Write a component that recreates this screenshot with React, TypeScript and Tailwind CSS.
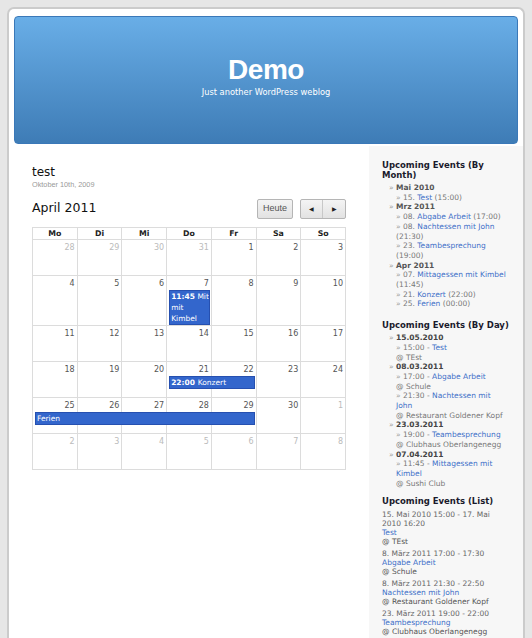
import type { ReactNode } from 'react';

const sans = "font-['DejaVu_Sans',Verdana,sans-serif]";

type Day = { n: number; other?: boolean };
type Ev = { col: string; time?: string; title: string; wrap?: boolean };

const colStart = [
  'col-start-1',
  'col-start-2',
  'col-start-3',
  'col-start-4',
  'col-start-5',
  'col-start-6',
  'col-start-7',
];

const weeks: { days: Day[]; events: Ev[] }[] = [
  {
    days: [{ n: 28, other: true }, { n: 29, other: true }, { n: 30, other: true }, { n: 31, other: true }, { n: 1 }, { n: 2 }, { n: 3 }],
    events: [],
  },
  {
    days: [4, 5, 6, 7, 8, 9, 10].map((n) => ({ n })),
    events: [{ col: 'col-[4/5]', time: '11:45', title: 'Mittagessen mit Kimbel', wrap: true }],
  },
  { days: [11, 12, 13, 14, 15, 16, 17].map((n) => ({ n })), events: [] },
  {
    days: [18, 19, 20, 21, 22, 23, 24].map((n) => ({ n })),
    events: [{ col: 'col-[4/6]', time: '22:00', title: 'Konzert' }],
  },
  {
    days: [{ n: 25 }, { n: 26 }, { n: 27 }, { n: 28 }, { n: 29 }, { n: 30 }, { n: 1, other: true }],
    events: [{ col: 'col-[1/6]', title: 'Ferien' }],
  },
  { days: [2, 3, 4, 5, 6, 7, 8].map((n) => ({ n, other: true })), events: [] },
];

function EventBar({ ev }: { ev: Ev }) {
  return (
    <div
      className={`${ev.col} row-start-2 mx-[2px] mb-[1px] bg-[#3366cc] border border-[#2650b0] text-white text-[7.5px] leading-[11px] px-[1px] overflow-hidden`}
    >
      {ev.wrap ? (
        <>
          <span className="whitespace-nowrap">
            <b>{ev.time}</b> Mittagessen
          </span>{' '}
          mit Kimbel
        </>
      ) : (
        <>
          {ev.time && <b>{ev.time} </b>}
          {ev.title}
        </>
      )}
    </div>
  );
}

function Calendar() {
  return (
    <div className="border-l border-t border-[#dcdcdc]">
      <div className="grid grid-cols-7">
        {['Mo', 'Di', 'Mi', 'Do', 'Fr', 'Sa', 'So'].map((d) => (
          <div
            key={d}
            className="border-r border-b border-[#dcdcdc] h-[12px] text-center text-[7.8px] leading-[11px] font-bold text-[#222]"
          >
            {d}
          </div>
        ))}
      </div>
      {weeks.map((w, wi) => (
        <div key={wi} className="grid grid-cols-7 grid-rows-[auto_auto_1fr] min-h-[36px]">
          {w.days.map((d, i) => (
            <div key={'c' + i} className={`${colStart[i]} row-[1/4] border-r border-b border-[#dcdcdc]`} />
          ))}
          {w.days.map((d, i) => (
            <div
              key={'n' + i}
              className={`${colStart[i]} row-start-1 text-right pr-[3px] pt-[2px] text-[8px] leading-[12px] ${
                d.other ? 'text-[#bbb]' : 'text-[#555]'
              }`}
            >
              {d.n}
            </div>
          ))}
          {w.events.map((ev, i) => (
            <EventBar key={'e' + i} ev={ev} />
          ))}
        </div>
      ))}
    </div>
  );
}

function Widget({ title, children, gap = 'mb-[11px]' }: { title: string; children: ReactNode; gap?: string }) {
  return (
    <div className={gap}>
      <h3 className="text-[8.5px] leading-[10px] font-bold text-[#1a1a2c] mb-[3px]">{title}</h3>
      {children}
    </div>
  );
}

const Raquo = () => <span className="text-[#999]">» </span>;
const L = ({ children }: { children: ReactNode }) => <span className="text-[#3d6fc8]">{children}</span>;

const byMonth: { month: string; items: [string, string, string][] }[] = [
  { month: 'Mai 2010', items: [['15.', 'Test', '(15:00)']] },
  {
    month: 'Mrz 2011',
    items: [
      ['08.', 'Abgabe Arbeit', '(17:00)'],
      ['08.', 'Nachtessen mit John', '(21:30)'],
      ['23.', 'Teambesprechung', '(19:00)'],
    ],
  },
  {
    month: 'Apr 2011',
    items: [
      ['07.', 'Mittagessen mit Kimbel', '(11:45)'],
      ['21.', 'Konzert', '(22:00)'],
      ['25.', 'Ferien', '(00:00)'],
    ],
  },
];

const byDay: { date: string; items: [string, string, string][] }[] = [
  { date: '15.05.2010', items: [['15:00', 'Test', 'TEst']] },
  {
    date: '08.03.2011',
    items: [
      ['17:00', 'Abgabe Arbeit', 'Schule'],
      ['21:30', 'Nachtessen mit John', 'Restaurant Goldener Kopf'],
    ],
  },
  { date: '23.03.2011', items: [['19:00', 'Teambesprechung', 'Clubhaus Oberlangenegg']] },
  { date: '07.04.2011', items: [['11:45', 'Mittagessen mit Kimbel', 'Sushi Club']] },
];

const list: [string, string, string][] = [
  ['15. Mai 2010 15:00 - 17. Mai 2010 16:20', 'Test', 'TEst'],
  ['8. März 2011 17:00 - 17:30', 'Abgabe Arbeit', 'Schule'],
  ['8. März 2011 21:30 - 22:50', 'Nachtessen mit John', 'Restaurant Goldener Kopf'],
  ['23. März 2011 19:00 - 22:00', 'Teambesprechung', 'Clubhaus Oberlangenegg'],
];

function Sidebar() {
  return (
    <aside className="w-[154px] shrink-0 bg-[#f7f7f7] pl-[13px] pr-[14px] pt-[14px] text-[7.5px] leading-[9.7px] text-[#777]">
      <Widget title="Upcoming Events (By Month)">
        <ul className="pl-[7px]">
          {byMonth.map((m) => (
            <li key={m.month}>
              <Raquo />
              <b className="text-[#555]">{m.month}</b>
              <ul className="pl-[7px]">
                {m.items.map(([d, t, h]) => (
                  <li key={t}>
                    <Raquo />
                    {d} <L>{t}</L> {h}
                  </li>
                ))}
              </ul>
            </li>
          ))}
        </ul>
      </Widget>
      <Widget title="Upcoming Events (By Day)" gap="mb-[8px]">
        <ul className="pl-[7px]">
          {byDay.map((d) => (
            <li key={d.date}>
              <Raquo />
              <b className="text-[#444]">{d.date}</b>
              <ul className="pl-[7px]">
                {d.items.map(([time, t, loc]) => (
                  <li key={t}>
                    <Raquo />
                    {time} - <L>{t}</L>
                    <div>@ {loc}</div>
                  </li>
                ))}
              </ul>
            </li>
          ))}
        </ul>
      </Widget>
      <Widget title="Upcoming Events (List)">
        <ul className="flex flex-col gap-[3px] text-[#666] leading-[9px] pt-[1px]">
          {list.map(([date, t, loc]) => (
            <li key={t}>
              <div>{date}</div>
              <div>
                <L>{t}</L>
              </div>
              <div className="text-[#555]">@ {loc}</div>
            </li>
          ))}
        </ul>
      </Widget>
    </aside>
  );
}

export default function App() {
  return (
    <div className={`${sans} min-h-[638px] bg-[#e6e6e6] px-[7px] pt-[7px]`}>
      <div className="bg-white border-2 border-b-0 border-[#cbcbcb] rounded-t-[7px] min-h-[631px] flex flex-col">
        <div className="px-[5px] pt-[7px] pb-[2px]">
          <header className="h-[128px] rounded-[4px] border border-[#3a78b8] bg-gradient-to-b from-[#69aee7] to-[#3e7cb6] flex flex-col items-center text-white">
            <h1 className="mt-[37px] font-['Liberation_Sans',Arial,sans-serif] font-bold text-[28px] leading-[32px] tracking-[-0.5px]">
              Demo
            </h1>
            <p className="text-[8.3px] leading-[10px] mt-[1px]">Just another WordPress weblog</p>
          </header>
        </div>
        <div className="flex flex-1">
          <main className="flex-1 pl-[23px] pr-[23px] pt-[19px]">
            <h2 className="text-[12px] leading-[15px] text-[#111]">test</h2>
            <div className="font-['Liberation_Sans',Arial,sans-serif] text-[7.3px] leading-[9px] text-[#999]">
              Oktober 10th, 2009
            </div>
            <div className="flex items-end justify-between mt-[10px] mb-[8px]">
              <div className="text-[12.5px] leading-[16px] text-[#111] mb-[3px]">April 2011</div>
              <div className="flex gap-[7px] font-['Liberation_Sans',Arial,sans-serif]">
                <button className="h-[20px] px-[5px] border border-[#b5b5b5] rounded-[2px] bg-gradient-to-b from-[#f4f4f4] to-[#e2e2e2] text-[9px] text-[#555]">
                  Heute
                </button>
                <div className="flex h-[20px] border border-[#b5b5b5] rounded-[2px] bg-gradient-to-b from-[#f4f4f4] to-[#e2e2e2] text-[6px] text-[#222]">
                  <button className="w-[22px] border-r border-[#c8c8c8]">◀</button>
                  <button className="w-[22px]">▶</button>
                </div>
              </div>
            </div>
            <Calendar />
          </main>
          <Sidebar />
        </div>
      </div>
    </div>
  );
}
